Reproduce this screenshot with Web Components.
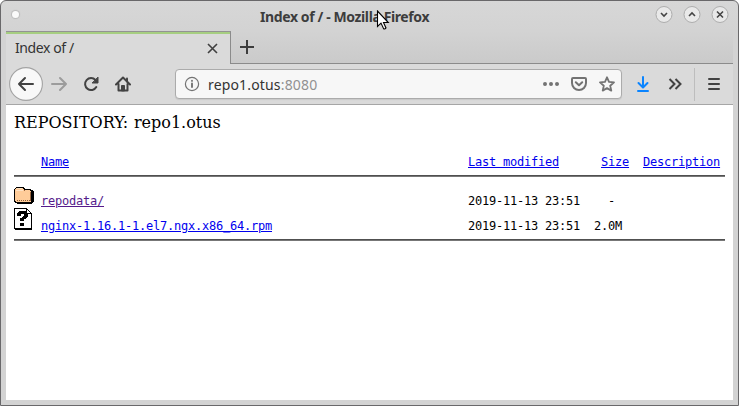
<!DOCTYPE html>
<html lang="en">
<head>
<meta charset="utf-8">
<title>Index of /</title>
<style>
html,body{margin:0;width:739px;height:406px;overflow:hidden;background:#fff}
</style>
</head>
<body>
<browser-window>
  <title-bar slot="title">Index of / - Mozilla Firefox</title-bar>
  <tab-strip slot="tabs">Index of /</tab-strip>
  <nav-bar slot="nav"><span>repo1.otus</span><span slot="port">:8080</span></nav-bar>
  <directory-page></directory-page>
</browser-window>
<script>
const define = (name, html) => customElements.define(name, class extends HTMLElement {
  constructor() {
    super();
    const t = document.createElement('template');
    t.innerHTML = html;
    this.attachShadow({mode: 'open'}).append(t.content.cloneNode(true));
  }
});

define('browser-window', `
<style>
:host{display:flex;flex-direction:column;box-sizing:border-box;width:739px;height:406px;padding:0 5px 5px;border:1px solid #69686a;border-radius:6px 6px 0 0;background:linear-gradient(#d7d7d7,#d3d3d3 30px);position:relative;font-family:"Noto Sans","Open Sans",sans-serif}
main{flex:1;background:#fff;min-height:0}
svg{position:absolute;left:375px;top:9px}
</style>
<slot name="title"></slot><slot name="tabs"></slot><slot name="nav"></slot>
<main><slot></slot></main>
<svg width="14" height="21" viewBox="0 0 14 21"><path d="M1.500 1v15.500l3.500-3.400 2.600 5.600q1.200.8 2.400-.8L7.500 12.500h4.800z" fill="#fff" stroke="#000" stroke-width="1.100"/></svg>`);

define('title-bar', `
<style>
:host{display:flex;align-items:center;height:30px;margin:0 -5px;color:#3d3d3d;font-size:14px;font-weight:700}
.dot{width:7px;height:7px;border-radius:50%;background:#fafafa;box-shadow:0 0 1px 1px #bbb;margin-left:11px;margin-top:-4px}
.t{margin-left:241px;width:175px;white-space:nowrap;letter-spacing:-.39px}
.b{margin-left:auto;display:flex;gap:10px;padding-right:9px;margin-top:-4px}
svg{display:block}
</style>
<i class="dot"></i><span class="t"><slot></slot></span>
<div class="b">
<svg width="18" height="18"><circle cx="9" cy="9.500" r="8" fill="#e9e9e9" stroke="#adadad"/><path d="M6 8l3 3 3-3" fill="none" stroke="#444" stroke-width="1.600"/></svg>
<svg width="18" height="18"><circle cx="9" cy="9.500" r="8" fill="#e9e9e9" stroke="#adadad"/><path d="M6 11l3-3 3 3" fill="none" stroke="#444" stroke-width="1.600"/></svg>
<svg width="18" height="18"><circle cx="9" cy="9.500" r="8" fill="#e9e9e9" stroke="#adadad"/><path d="M6 6.500l6 6m0-6l-6 6" fill="none" stroke="#444" stroke-width="1.600"/></svg>
</div>`);

define('tab-strip', `
<style>
:host{display:flex;height:33px;font-size:14px;color:#333}
.tab{box-sizing:border-box;width:225px;border-top:1px solid #939393;border-right:1px solid #8b8b8b;background:#dadada;box-shadow:inset 0 2px #a6ce81;display:flex;align-items:center;padding:0 12px 0 9px;justify-content:space-between}
.tab span{letter-spacing:-.4px;margin-top:-1px}
.rest{flex:1;border-bottom:1px solid #8b8b8b;padding:9px 0 0 9px;background:linear-gradient(#d3d3d3,#cacaca)}
svg{display:block}
</style>
<div class="tab"><span><slot></slot></span><svg width="11" height="11"><path d="M1 1l9 9m0-9l-9 9" stroke="#404040" stroke-width="1.600"/></svg></div>
<div class="rest"><svg width="14" height="14"><path d="M7 0v14M0 7h14" stroke="#3c3c3c" stroke-width="2"/></svg></div>`);

define('nav-bar', `
<style>
:host{display:flex;align-items:center;height:41px;box-sizing:border-box;border-bottom:1px solid #a6a6a6;background:#dadada;color:#333;font-size:14px}
svg{display:block;flex:none;fill:none;stroke:#424242;stroke-width:2;stroke-linecap:round;stroke-linejoin:round}
.back{margin-left:3px}.fwd{margin-left:8px;stroke:#9c9c9c}.re{margin-left:16px}.home{margin-left:16px}
.url{display:flex;align-items:center;box-sizing:border-box;width:447px;height:30px;margin-left:44px;border:1px solid #ababab;border-radius:4px;background:#f7f7f7;padding:0 6px 0 8px;box-shadow:0 1px 1px #c9c9c9}
.host{margin-left:8px;display:flex;letter-spacing:.16px}.p{color:#919191}
.acts{margin-left:auto;display:flex;gap:12px;align-items:center}
.acts svg,.info{stroke:#737373}
.dl{margin-left:13px;stroke:#0a84ff}.more{margin-left:16px}
.sep{width:1px;height:33px;background:#bdbdbd;margin-left:11px}.menu{margin-left:12px}
</style>
<svg class="back" width="34" height="34"><circle cx="17" cy="17" r="16.400" fill="#f8f8f8" stroke="#a3a3a3" stroke-width="1.100"/><path d="M24 17H10M16 11l-6 6 6 6"/></svg>
<svg class="fwd" width="16" height="16"><path d="M1 8h14M9 2l6 6-6 6"/></svg>
<svg class="re" width="16" height="16"><path d="M13.300 11A6 6 0 1 1 12.500 4"/><path d="M15 1.500V7H9.500z" fill="#424242" stroke-width="1"/></svg>
<svg class="home" width="16" height="16"><path d="M1 8.500L8 1.500l7 7M3.500 8v6.500h9V8"/><path d="M12 2.500v3"/><path d="M6.500 14.500V9.500h3v5z" fill="#424242" stroke-width="1"/></svg>
<div class="url">
<svg class="info" width="16" height="16"><circle cx="8" cy="8" r="6.600" stroke-width="1.200"/><path d="M8 7.500v3.500M8 4.800v.1" stroke-width="1.900"/></svg>
<div class="host"><slot></slot><span class="p"><slot name="port"></slot></span></div>
<div class="acts">
<svg width="16" height="16"><path d="M2 8h.01M8 8h.01M14 8h.01" stroke-width="4"/></svg>
<svg width="16" height="16"><path d="M2 2h12q1 0 1 1v4a7 7 0 0 1-14 0V3q0-1 1-1zM4.800 6.300L8 9.300l3.200-3"/></svg>
<svg width="16" height="16"><path d="M8 1.300l2 4.600 5 .5-3.800 3.300 1.100 4.900L8 12.100l-4.300 2.500 1.100-4.900L1 6.400l5-.5z" stroke-width="1.800"/></svg>
</div></div>
<svg class="dl" width="16" height="16"><path d="M8 1v10M3.500 7L8 11.500 12.500 7M3 15h10"/></svg>
<svg class="more" width="16" height="16"><path d="M2.500 3l5 5-5 5M8.500 3l5 5-5 5" stroke-linecap="butt" stroke-linejoin="miter"/></svg>
<i class="sep"></i>
<svg class="menu" width="14" height="16"><path d="M2 3h10M2 8h10M2 13h10"/></svg>`);

define('file-row', `
<style>
:host{display:grid;grid-template-columns:27px 427px 1fr;align-items:end;height:25px;white-space:pre;line-height:14px}
.i{align-self:start;height:22px}
</style>
<span class="i"><slot name="icon"></slot></span><span><slot name="name"></slot></span><span><slot></slot></span>`);

define('directory-page', `
<style>
:host{display:block;padding:8px 8px 0;color:#000}
h1{margin:0;font:16px/20px "DejaVu Serif",serif;white-space:nowrap;word-spacing:.6px}
.list{font:12px/14px "DejaVu Sans Mono",monospace;letter-spacing:-.2246px;margin-top:17px}
a{color:#00e;text-decoration:underline}.v{color:#551a8b}
hr{border:0;margin:0;height:2px;background:linear-gradient(#505050 50%,#777 50%)}
.head{height:20px;padding-top:5px;align-items:start}
.rows{padding:6px 0;display:flex;flex-direction:column}
svg{display:block;shape-rendering:crispEdges}
</style>
<h1>REPOSITORY: repo1.otus</h1>
<div class="list">
<file-row class="head"><a slot="name">Name</a><a>Last modified</a>      <a>Size</a>  <a>Description</a></file-row>
<hr>
<div class="rows">
<file-row><svg slot="icon" width="20" height="22"><path d="M2 4h8v1h1v1h6v1h2v1h1v11h-1v1h-1v1H3v-1H1v-1H0V6h1V5h1z" fill="#000"/><path d="M2 5h7v1h1v1h6v1h1v11H2v-1H1V6h1z" fill="#fc9"/><path d="M3 8h7V7h1v1H3v1zM16 9h1v9h-1z" fill="#996640"/><path d="M3 17.500h13" stroke="#855b38" stroke-dasharray="1 1"/><path d="M3 5.500h5M2 7.500h7" stroke="#ffe3c5"/></svg><a slot="name" class="v">repodata/</a>2019-11-13 23:51    -</file-row>
<file-row><svg slot="icon" width="20" height="22"><path d="M0 0h13v1h1v1h1v1h1v1h1v1h1v17H1v-1H0z" fill="#000"/><path d="M1 1h11v5h5v14H1z" fill="#fff"/><path d="M13 2h1v1h1v1h1v1h-3z" fill="#fff"/><path d="M5 3h7v1h1v1h1v4h-1v1h-1v1h-2v2H6v-3h2V9h1V8h1V6H7v2H3V5h1V4h1zM6 15h4v3H6z" fill="#000"/></svg><a slot="name">nginx-1.16.1-1.el7.ngx.x86_64.rpm</a>2019-11-13 23:51  2.0M</file-row>
</div>
<hr>
</div>`);
</script>
</body>
</html>
